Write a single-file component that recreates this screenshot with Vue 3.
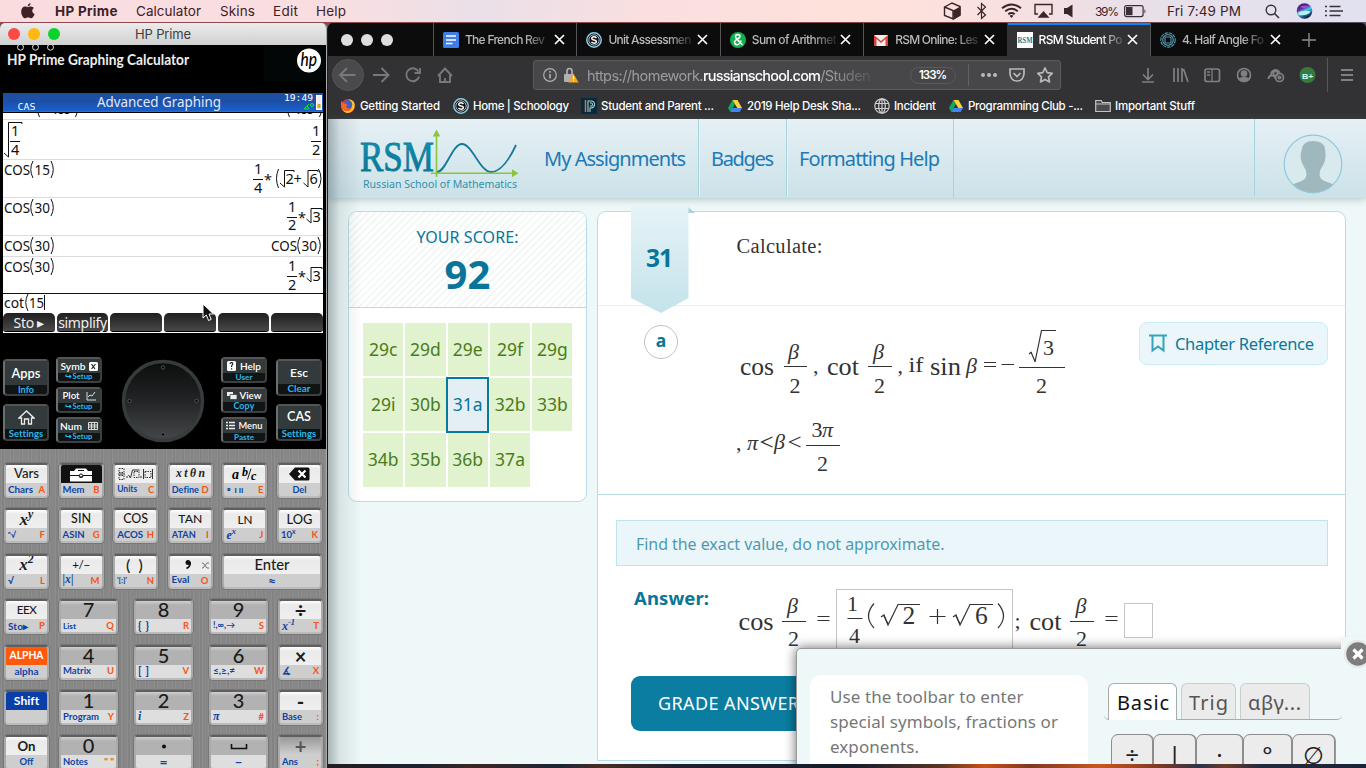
<script setup>
const widthOf = (el) => {
  const range = document.createRange()
  range.selectNodeContents(el)
  return range.getBoundingClientRect().width
}

// v-fit sets a label to a given width by tracking; v-fit.size scales the type first.
const vFit = {
  mounted(el, { value, modifiers }) {
    let natural = widthOf(el)
    if (!natural) return
    if (modifiers.size) {
      const ratio = Math.min(1.18, Math.max(0.86, value / natural))
      el.style.fontSize = (parseFloat(getComputedStyle(el).fontSize) * ratio).toFixed(2) + 'px'
      natural = widthOf(el)
    }
    const gaps = el.textContent.length - 1
    if (gaps > 0) el.style.letterSpacing = ((value - natural) / gaps).toFixed(3) + 'px'
  },
}

const menus = [
  { t: 'Calculator', w: 65, box: 84 },
  { t: 'Skins', w: 35, box: 53 },
  { t: 'Edit', w: 25, box: 43 },
  { t: 'Help', w: 30, box: 40 },
]

const tabs = [
  { t: 'The French Rev', w: 80, icon: 'doc' },
  { t: 'Unit Assessmen', w: 83, icon: 'schoology' },
  { t: 'Sum of Arithmet', w: 85, icon: 'amp' },
  { t: 'RSM Online: Les', w: 83, icon: 'gmail' },
  { t: 'RSM Student Po', w: 84, icon: 'rsm', active: true },
  { t: '4. Half Angle Fo', w: 82, icon: 'ring' },
]

const bookmarks = [
  { t: 'Getting Started', w: 80, box: 113, icon: 'fox' },
  { t: 'Home | Schoology', w: 96, box: 128, icon: 'schoology' },
  { t: 'Student and Parent ...', w: 113, box: 146, icon: 'power' },
  { t: '2019 Help Desk Sha...', w: 114, box: 147, icon: 'drive' },
  { t: 'Incident', w: 42, box: 74, icon: 'globe' },
  { t: 'Programming Club -...', w: 115, box: 147, icon: 'drive' },
  { t: 'Important Stuff', w: 80, box: 110, icon: 'folder' },
]

const scores = ['29c', '29d', '29e', '29f', '29g', '29i', '30b', '31a', '32b', '33b', '34b', '35b', '36b', '37a']

const darkKeys = [
  { cls: 'side', keys: [{ t: 'Apps', w: 29, s: 'Info', sw: 16 }, { icon: 'home', s: 'Settings', sw: 34 }] },
  { cls: 'mid', keys: [{ t: 'Symb', w: 25, s: '↪Setup', sw: 27, after: 'x' }, { t: 'Plot', w: 17, s: '↪Setup', sw: 27, after: 'plot' }, { t: 'Num', w: 22, s: '↪Setup', sw: 27, after: 'num' }] },
  { cls: 'wheelbox', keys: [] },
  { cls: 'mid', keys: [{ t: 'Help', w: 21, s: 'User', sw: 17, before: 'help' }, { t: 'View', w: 22, s: 'Copy', sw: 21, before: 'view' }, { t: 'Menu', w: 24, s: 'Paste', sw: 20, before: 'menu' }] },
  { cls: 'side', keys: [{ t: 'Esc', w: 18, s: 'Clear', sw: 23 }, { t: 'CAS', w: 24, s: 'Settings', sw: 34 }] },
]

const rows = [
  { cls: 'six', keys: [
    { t: 'Vars', w: 25, b: 'Chars', bw: 25, o: 'A' },
    { icon: 'mem', b: 'Mem', bw: 22, o: 'B' },
    { icon: 'units', b: 'Units', bw: 20, o: 'C' },
    { t: 'x t θ n', w: 29, k: 'kmath', b: 'Define', bw: 27, o: 'D' },
    { icon: 'abc', b: '∘ ı ıı', bw: 17, o: 'E' },
    { icon: 'del', b: 'Del', bw: 14, k: 'solo' },
  ] },
  { cls: 'six', keys: [
    { t: 'x', sup: 'y', k: 'kmathbig', b: 'ⁿ√', bw: 8, o: 'F' },
    { t: 'SIN', w: 20, b: 'ASIN', bw: 22, o: 'G' },
    { t: 'COS', w: 25, b: 'ACOS', bw: 26, o: 'H' },
    { t: 'TAN', w: 24, b: 'ATAN', bw: 24, o: 'I' },
    { t: 'LN', w: 15, b: 'e', bsup: 'x', o: 'J', bk: 'ital' },
    { t: 'LOG', w: 26, b: '10', bsup: 'x', o: 'K' },
  ] },
  { cls: 'six', keys: [
    { t: 'x', sup: '2', k: 'kmathbig', b: '√', o: 'L' },
    { t: '+/−', w: 18, b: '|x|', bw: 11, o: 'M', bk: 'ital' },
    { t: '( )', w: 17, b: "'[:]'", bw: 10, o: 'N' },
    { icon: 'comma', b: 'Eval', bw: 18, o: 'O' },
    { t: 'Enter', w: 35, b: '≈', k: 'enter solo' },
  ] },
  { cls: 'num', keys: [
    { t: 'EEX', w: 20, b: 'Sto▸', bw: 20, o: 'P' },
    { t: '7', k: 'digit', b: 'List', bw: 13, o: 'Q' },
    { t: '8', k: 'digit', b: '{ }', bw: 11, o: 'R' },
    { t: '9', k: 'digit', b: '!,∞,→', bw: 22, o: 'S' },
    { t: '÷', k: 'op', b: 'x', bsup: '-1', o: 'T', bk: 'ital' },
  ] },
  { cls: 'num', keys: [
    { t: 'ALPHA', w: 34, k: 'alpha solo', b: 'alpha', bw: 24 },
    { t: '4', k: 'digit', b: 'Matrix', bw: 28, o: 'U' },
    { t: '5', k: 'digit', b: '[ ]', bw: 11, o: 'V' },
    { t: '6', k: 'digit', b: '≤,≥,≠', bw: 22, o: 'W' },
    { t: '×', k: 'op', b: '∡', o: 'X' },
  ] },
  { cls: 'num', keys: [
    { t: 'Shift', w: 25, k: 'shift', b: '' },
    { t: '1', k: 'digit', b: 'Program', bw: 36, o: 'Y' },
    { t: '2', k: 'digit', b: 'i', o: 'Z', bk: 'ital' },
    { t: '3', k: 'digit', b: 'π', o: '#', bk: 'ital' },
    { t: '-', k: 'op', b: 'Base', bw: 20, o: ':' },
  ] },
  { cls: 'num', keys: [
    { t: 'On', w: 18, b: 'Off', bw: 14, k: 'solo onkey' },
    { t: '0', k: 'digit', b: 'Notes', bw: 25, o: '" "' },
    { icon: 'period', k: 'digit solo sign', b: '=' },
    { icon: 'space', k: 'digit solo sign', b: '–' },
    { t: '+', k: 'op pressed', b: 'Ans', bw: 16, o: ';' },
  ] },
]

const history = [
  { x: 4, y: 175, n: '15' },
  { x: 4, y: 213, n: '30' },
  { x: 4, y: 251, n: '30' },
  { x: 271, y: 251, n: '30' },
  { x: 4, y: 272, n: '30' },
]
</script>

<template>
  <div class="desktop">
    <header class="menubar">
      <svg class="apple" width="14" height="16" viewBox="0 0 14 16"><path fill="#3c2227" d="M9.6 0c.2 1.600-1.200 3.400-2.900 3.400C6.500 1.800 8 .3 9.600 0zM7 4.200c.7 0 1.700-.8 3.100-.7 1.200.1 2.200.6 2.800 1.500-2.500 1.600-2 4.900.7 5.900-.6 1.700-2 4.400-3.600 4.400-1.100 0-1.500-.7-2.900-.7s-1.800.7-2.900.7C2 15.300 0 11.400.2 8.200.3 5.400 2.100 3.700 4 3.600c1.300 0 2.300.6 3 .6z"/></svg>
      <span class="appname"><b v-fit="62.5">HP Prime</b></span>
      <span v-for="m in menus" :key="m.t" :style="{ width: m.box + 'px' }"><span v-fit="m.w">{{ m.t }}</span></span>
      <svg class="status" width="140" height="22" viewBox="940 0 140 22" fill="none" stroke="#3a2529" stroke-width="1.4">
        <path d="M944.500 7l7.500-4 8 3.500v8.500l-6.500 4-9-3.500z"/><path fill="#3a2529" stroke="none" d="M953 10.500l7.500-4v9l-7 4z"/><path d="M944.500 7l8.500 3.500v9"/>
        <path stroke-width="1.200" d="M977.500 7l8 8-4 3.500V3.500l4 3.500-8 8"/>
        <path stroke-width="2" d="M1002 8.200q9.500-7.500 19 0M1005.200 11.300q6.300-5 12.600 0M1008.300 14.300q3.200-2.500 6.400 0"/><path fill="#3a2529" stroke="none" d="M1009.500 15.800l2 2.200 2-2.200q-2-1.500-4 0z"/>
        <path d="M1038 14h-3V4.500h17V14h-3"/><path fill="#3a2529" stroke="none" d="M1043.500 11l6 6.800h-12z"/>
        <path fill="#3a2529" stroke="none" d="M1064 8h3l5.500-3.500v13L1067 14h-3z"/>
      </svg>
      <span class="pct"><span v-fit="24">39%</span></span>
      <svg class="batt" width="24" height="22" viewBox="0 0 24 22"><rect x=".6" y="5.600" width="18.500" height="11" rx="2" fill="none" stroke="#3a2f38" stroke-width="1.200"/><rect x="2" y="7" width="6.500" height="8.200" fill="#3a2f38"/><path fill="#3a2f38" d="M20.500 9v4.500q2-2.200 0-4.500z"/></svg>
      <span class="clock"><span v-fit="74">Fri 7:49 PM</span></span>
      <svg width="86" height="22" viewBox="1260 0 86 22">
        <circle cx="1271" cy="10" r="4.800" fill="none" stroke="#3a3038" stroke-width="1.400"/><path d="M1274.500 13.500l4.500 4.500" stroke="#3a3038" stroke-width="1.600"/>
        <defs><linearGradient id="siri" x1="0" y1="0" x2=".5" y2="1"><stop offset="0" stop-color="#1b1648"/><stop offset=".4" stop-color="#6a2aa8"/><stop offset=".6" stop-color="#46c8e8"/><stop offset="1" stop-color="#0c1d4a"/></linearGradient></defs>
        <circle cx="1304.500" cy="11" r="7.800" fill="url(#siri)"/><path d="M1298 12.500q5-3 13-1-5 5-12 3.500z" fill="#b8f0fa"/><path d="M1300 7q4-2.500 8 0-3 2-8 0z" fill="#b04cd0"/>
        <path d="M1325 6.500h2M1325 11h2M1325 15.500h2M1329.500 6.500h11M1329.500 11h13.500M1329.500 15.500h11" stroke="#3a3038" stroke-width="1.700"/>
      </svg>
    </header>

    <section class="calc">
      <div class="calc-title">
        <i class="bead red"></i><i class="bead amber"></i><i class="bead green"></i>
        <span class="calc-name"><span v-fit="56">HP Prime</span></span>
      </div>
      <div class="calc-top">
        <svg class="brand-row" width="327" height="48" viewBox="0 45 327 48">
          <rect x="264" y="46" width="63" height="36" fill="#030606"/>
          <g fill="none" stroke="#ddd"><circle cx="20.500" cy="47.200" r="3"/><circle cx="35.500" cy="47.200" r="3"/><circle cx="50.500" cy="47.200" r="3"/></g>
          <text x="7" y="65" class="brand" textLength="182" lengthAdjust="spacingAndGlyphs">HP Prime Graphing Calculator</text>
          <circle cx="309" cy="60.500" r="12" fill="#fff"/>
          <text x="300.500" y="66" class="hp" textLength="16.500" lengthAdjust="spacingAndGlyphs">hp</text>
        </svg>
        <div class="screen">
          <svg width="320" height="20" viewBox="3 93 320 20">
            <defs><linearGradient id="bar" x1="0" y1="0" x2="0" y2="1"><stop offset="0" stop-color="#1d4f9e"/><stop offset=".5" stop-color="#1e4fa8"/><stop offset="1" stop-color="#1761cf"/></linearGradient></defs>
            <rect x="3" y="93" width="320" height="18" fill="url(#bar)"/><path d="M3 111.500h320" stroke="#666"/>
            <text x="17.500" y="109.500" class="lcd" font-size="9.500" textLength="18" lengthAdjust="spacingAndGlyphs">CAS</text>
            <text x="97" y="107" class="lcd-title" textLength="124" lengthAdjust="spacingAndGlyphs">Advanced Graphing</text>
            <text x="284" y="101" class="lcd" font-size="9" textLength="29" lengthAdjust="spacingAndGlyphs">19:49</text>
            <path d="M309 104l-5 5h5M307 106l2 3" stroke="#18e04a" fill="none"/><circle cx="312" cy="105" r="1.500" stroke="#18e04a" fill="none"/>
            <rect x="316.500" y="95.500" width="5" height="14" fill="#eee" stroke="#fff"/><rect x="317.500" y="104" width="3" height="4" fill="#d9a514"/>
          </svg>
          <svg class="history" width="320" height="180" viewBox="3 113 320 180">
            <rect x="3" y="113" width="320" height="180" fill="#fff"/>
            <path d="M3 119.500h320M3 159.500h320M3 197.500h320M3 235.500h320M3 256.500h320" stroke="#dcdcdc"/>
            <text x="51" y="114" textLength="20">100</text><text x="294" y="114" textLength="20">100</text>
            <path class="ln" d="M38 113l1.500 4M77 113l-1.500 4M288 113l1.500 4M321 113l-1.500 4"/>
            <path class="ln" d="M4 153l4.500 4V122.500H22v1.500M10 141.500h10M311 141.500h10M253 179.500h10M287 217.500h10M287 276.500h10"/>
            <path class="ln" d="M280 183l4.500 4V170.500H294v1.500M303.500 183l4.500 4V170.500H318v1.500M306.500 219l4.500 4V208.500H322v1.500M306.500 278l4.500 4V267.500H322v1.500"/>
            <text x="11" y="135.500">1</text><text x="11" y="154.500">4</text><text x="312" y="135.500">1</text><text x="312" y="155">2</text>
            <text x="254" y="174">1</text><text x="254" y="192.500">4</text><text x="264" y="185">*</text><text x="285.500" y="184">2</text><text x="293.500" y="184">+</text><text x="309.500" y="184">6</text>
            <path class="ln" d="M278.500 169q-4 9.500 0 19M318.500 169q5 9.500 0 19"/>
            <text x="288" y="211.500">1</text><text x="288" y="230">2</text><text x="298" y="223">*</text><text x="312.500" y="222">3</text>
            <text x="288" y="271">1</text><text x="288" y="289.500">2</text><text x="298" y="282">*</text><text x="312.500" y="281">3</text>
            <g v-for="(h, i) in history" :key="i">
              <text :x="h.x" :y="h.y" textLength="26" lengthAdjust="spacingAndGlyphs">COS</text>
              <text :x="h.x + 30.500" :y="h.y" textLength="15.500" lengthAdjust="spacingAndGlyphs">{{ h.n }}</text>
              <path class="ln" :d="`M${h.x + 29} ${h.y - 14}q-4.500 8.500 0 17M${h.x + 47} ${h.y - 14}q4.500 8.500 0 17`"/>
            </g>
          </svg>
          <svg class="entry" width="320" height="20" viewBox="3 293 320 20">
            <rect x="3" y="293" width="320" height="20" fill="#fff"/><path class="ln" d="M3 293.500h320M44.500 295v15"/>
            <text x="4" y="308" textLength="20" lengthAdjust="spacingAndGlyphs">cot</text><text x="29" y="308" textLength="15" lengthAdjust="spacingAndGlyphs">15</text>
            <path class="ln" d="M28 294q-4.500 8.500 0 17"/>
          </svg>
          <div class="softkeys">
            <span><em v-fit="31">Sto ▸</em></span><span><em v-fit="49">simplify</em></span><span></span><span></span><span></span><span></span>
          </div>
        </div>
        <div class="dark-keys">
          <div v-for="(c, ci) in darkKeys" :key="ci" :class="['dcol', c.cls]">
            <svg v-if="c.cls === 'wheelbox'" width="84" height="84" viewBox="-42 -42 84 84">
              <defs><linearGradient id="wheel" x1="0" y1="0" x2="0" y2="1"><stop offset="0" stop-color="#0c0d0d"/><stop offset=".5" stop-color="#222425"/><stop offset="1" stop-color="#45484a"/></linearGradient></defs>
              <circle r="39.500" fill="url(#wheel)" stroke="#363b3c" stroke-width="3.500"/>
              <g fill="#000" stroke="#555"><circle cy="-33.500" r="1.700"/><circle cy="33.500" r="1.700"/><circle cx="-33.500" r="1.700"/><circle cx="33.500" r="1.700"/></g>
            </svg>
            <div v-for="(k, i) in c.keys" :key="i" class="dkey">
              <div class="dmain">
                <svg v-if="k.icon" width="17" height="15" viewBox="0 0 17 15" fill="none" stroke="#eee" stroke-width="1.300"><path d="M1 8L8.500 1 16 8h-2.500v6h-3V9h-4v5h-3V8z"/></svg>
                <svg v-if="k.before === 'help'" width="10" height="11" viewBox="0 0 10 11"><rect width="9" height="10" y="1" rx="1.500" fill="#fff"/><path d="M3 4q.2-1.400 1.700-1.300Q6.300 3 5.500 4.500L4.600 6v1M4.600 8.200v1.300" stroke="#222" fill="none" stroke-width="1.200"/></svg>
                <svg v-if="k.before === 'view'" width="10" height="9" viewBox="0 0 10 9"><path fill="#eee" d="M0 1h6v4H0z"/><path fill="#eee" stroke="#333" stroke-width=".7" d="M3 3.500h7v5H3z"/></svg>
                <svg v-if="k.before === 'menu'" width="10" height="9" viewBox="0 0 10 9" stroke="#eee" stroke-width="1.400"><path d="M0 1.500h2M0 4.500h2M0 7.500h2M3 1.500h6M3 4.500h6M3 7.500h6"/></svg>
                <span v-if="k.t" v-fit.size="k.w">{{ k.t }}</span>
                <svg v-if="k.after === 'x'" width="9" height="10" viewBox="0 0 9 10"><rect width="9" height="9" y="1" rx="1.500" fill="#fff"/><path d="M2.500 3l3.500 5M6.500 3l-4 5" stroke="#222" stroke-width="1.200"/></svg>
                <svg v-if="k.after === 'plot'" class="gapped" width="10" height="10" viewBox="0 0 10 10" fill="none" stroke="#ddd"><path d="M1 1v8h9M2 6l2-2 2 1 3-4"/></svg>
                <svg v-if="k.after === 'num'" class="gapped" width="10" height="10" viewBox="0 0 10 10" fill="none" stroke="#ddd"><path d="M.5 1.500h9v7h-9zM.5 4h9M.5 6h9M3.500 1.500v7M6.500 1.500v7"/></svg>
              </div>
              <div class="dsub"><span v-fit.size="k.sw">{{ k.s }}</span></div>
            </div>
          </div>
        </div>
      </div>
      <div class="calc-bottom">
        <div v-for="(r, ri) in rows" :key="ri" :class="['krow', r.cls]">
          <div v-for="(k, i) in r.keys" :key="i" :class="['key', k.k]">
            <div class="face" :class="{ memface: k.icon === 'mem' }">
              <svg v-if="k.icon === 'mem'" width="24" height="15" viewBox="0 0 24 15"><path fill="#fff" d="M1 4h4l2-2.500h10L19 4h4v4H1zM1 9h8.500q.5 2 2.500 2t2.500-2H23v5.500H1z"/><path d="M9 3.500h6" stroke="#111"/><circle cx="12" cy="8.500" r="1.600" fill="#fff" stroke="#111"/></svg>
              <svg v-else-if="k.icon === 'units'" width="36" height="14" viewBox="0 0 36 14" fill="none" stroke="#333"><path stroke-dasharray="1.500 1" d="M1 1.500h5v4H1zM1 8.500h5v4H1zM16 4.500h5v6h-5zM27 4.500h6v6h-6z"/><path d="M0 7h7M9 9v2M10.500 8l2 3 2-8h7M23 9v2M25.500 2v10M34.500 2v10"/></svg>
              <svg v-else-if="k.icon === 'abc'" class="abc" width="28" height="16" viewBox="0 0 28 16"><text x="1" y="12.500" font-size="14">a</text><text x="11" y="9.500" font-size="12">b</text><text x="20" y="14" font-size="12">c</text><path d="M20 2.500l-3.500 11" stroke="#222"/></svg>
              <svg v-else-if="k.icon === 'del'" width="21" height="14" viewBox="0 0 21 14"><path fill="#111" d="M0 7L6 .5h13q1.500 0 1.500 1.500v10q0 1.500-1.500 1.500H6z"/><path d="M9.500 3.500l7 7M16.500 3.500l-7 7" stroke="#fff" stroke-width="2.200"/></svg>
              <svg v-else-if="k.icon === 'comma'" class="comma" width="26" height="14" viewBox="0 0 26 14"><circle cx="5" cy="4.500" r="2.500" fill="#111"/><path d="M7 4q1 4-3.500 6.500" stroke="#111" stroke-width="1.700" fill="none"/><path d="M19 5h1l4 5h2M19 10h1l4-5h2" stroke="#555" fill="none" stroke-width=".8"/></svg>
              <svg v-else-if="k.icon === 'space'" width="18" height="10" viewBox="0 0 18 10"><path d="M1.500 4v4.500h15V4" fill="none" stroke="#111" stroke-width="1.600"/></svg>
              <svg v-else-if="k.icon === 'period'" width="6" height="10" viewBox="0 0 6 10"><circle cx="3" cy="6.500" r="2" fill="#111"/></svg>
              <span v-else-if="k.w" v-fit.size="k.w">{{ k.t }}</span>
              <span v-else>{{ k.t }}<sup v-if="k.sup">{{ k.sup }}</sup></span>
            </div>
            <div class="legend" :class="k.bk">
              <span v-if="k.bw" v-fit.size="k.bw" class="blue">{{ k.b }}</span>
              <span v-else class="blue">{{ k.b }}<sup v-if="k.bsup">{{ k.bsup }}</sup></span>
              <span v-if="k.o" class="orange">{{ k.o }}</span>
            </div>
          </div>
        </div>
      </div>
      <svg class="pointer" width="14" height="20" viewBox="0 0 14 20"><path d="M1 1v14l3.300-3 2.300 5.500 2.600-1.100L7 11h4.500z" fill="#111" stroke="#fff" stroke-width="1"/></svg>
    </section>

    <section class="browser">
      <div class="tabbar">
        <div class="lights"><i></i><i></i><i></i></div>
        <div v-for="t in tabs" :key="t.t" class="tab" :class="{ active: t.active }">
          <svg width="16" height="16" viewBox="0 0 16 16">
            <g v-if="t.icon === 'doc'"><rect width="16" height="16" rx="1.500" fill="#3f7de8"/><path d="M3 4h10M3 8h10M3 11.500h6.500" stroke="#fff" stroke-width="1.500"/></g>
            <g v-if="t.icon === 'schoology'"><circle cx="8" cy="8" r="7.200" fill="#111" stroke="#86cdee" stroke-width="1.500"/><circle cx="8" cy="8" r="5.200" fill="none" stroke="#ddd" stroke-width=".8"/><path d="M10.500 5.800Q8 3.800 6 5.500q-1 1.800 2 2.500 3.300.8 2 2.600Q8 12 5.400 10.200" fill="none" stroke="#fff" stroke-width="1.500"/></g>
            <g v-if="t.icon === 'amp'"><circle cx="8" cy="8" r="8" fill="#12b04f"/><path d="M12.500 13L6 6q-1.500-3 1.500-3.500 3 0 2.300 2.500Q9 6.500 6 8q-2.500 2-.8 4 3.300 2.500 6-3.500" fill="none" stroke="#fff" stroke-width="1.600"/></g>
            <g v-if="t.icon === 'gmail'"><path d="M1 3h14v11H1z" fill="#eee"/><path d="M1 14V3l7 6 7-6v11h-2.500V7L8 11 3.500 7v7z" fill="#d9453a"/></g>
            <g v-if="t.icon === 'rsm'"><rect width="16" height="16" fill="#fff"/><text x=".5" y="11" textLength="15" lengthAdjust="spacingAndGlyphs" class="rsmfav">RSM</text></g>
            <g v-if="t.icon === 'ring'" fill="none" stroke="#4e93a6" stroke-width="1.200"><circle cx="8" cy="8" r="7.200" stroke-dasharray="3.500 .8"/><circle cx="8" cy="8" r="5.300"/><rect x="5" y="5" width="6" height="6" rx="1"/></g>
          </svg>
          <span class="tabtext"><span v-fit="t.w">{{ t.t }}</span></span>
          <svg width="11" height="11" viewBox="0 0 11 11"><path d="M1 1l9 9M10 1l-9 9" stroke="#fff" stroke-width="1.700"/></svg>
        </div>
        <svg class="newtab" width="14" height="14" viewBox="0 0 14 14"><path d="M7 0v14M0 7h14" stroke="#8d8d8f" stroke-width="1.400"/></svg>
      </div>
      <div class="toolbar">
        <svg width="200" height="36" viewBox="328 58 200 36" fill="none" stroke="#78787a" stroke-width="1.900">
          <circle cx="348" cy="76" r="15.500" fill="#4a4a4c" stroke="#565658" stroke-width="1"/>
          <path d="M355.500 76h-15M347 69l-7 7 7 7M373 76h15M381.500 69l7 7-7 7"/>
          <path d="M418.500 72.500a6.500 6.500 0 1 0 .6 5M420 69v5h-5.500"/>
          <path d="M438 77l7-7.500 7 7.500M440 76v7h10v-7M445 79v4"/>
        </svg>
        <div class="urlbar">
          <svg width="53" height="28" viewBox="534 62 53 28">
            <circle cx="550" cy="76" r="6.300" fill="none" stroke="#b0b0b3" stroke-width="1.200"/><path d="M550 75v4.500M550 72v1.700" stroke="#b0b0b3" stroke-width="1.600"/>
            <path d="M567 75v-3q0-2.500 2.500-2.500T572 72v3" fill="none" stroke="#b0b0b3" stroke-width="1.700"/><rect x="564" y="75" width="10" height="8" rx="1" fill="#b0b0b3"/><path d="M573.500 74.500l5 9h-10z" fill="#f7a91c"/><path d="M573.500 77v3.500M573.500 81.500v1" stroke="#fff"/>
          </svg>
          <span class="url"><span v-fit="116.5">https://homework.</span><b v-fit="118">russianschool.com</b><span v-fit="50.5">/Studen</span></span>
          <span class="pill"><span v-fit="28">133%</span></span>
          <svg width="90" height="28" viewBox="968 62 90 28" fill="none" stroke="#b9b9bb" stroke-width="1.700">
            <path d="M968.500 65v22" stroke="#606468" stroke-width="1"/><g fill="#b9b9bb" stroke="none"><circle cx="983" cy="76" r="2"/><circle cx="989" cy="76" r="2"/><circle cx="995" cy="76" r="2"/></g>
            <path d="M1010 70h14v5q-1 7-7 7t-7-7zM1013.500 74l3.500 3.500 3.500-3.500"/>
            <path stroke-linejoin="round" d="M1045 69l2.200 4.700 5 .7-3.700 3.500 1 5-4.500-2.500-4.500 2.500 1-5-3.700-3.500 5-.7z"/>
          </svg>
        </div>
        <svg class="tools" width="226" height="36" viewBox="1140 58 226 36" fill="none" stroke="#808082" stroke-width="1.700">
          <path d="M1148 69v11M1143 75.500l5 5 5-5M1142 83h12M1174 69v14M1178 69v14M1182 69v14M1183.500 70l4.500 13"/>
          <rect x="1205" y="70" width="14.500" height="12.500" rx="2"/><path d="M1212 70v12.500M1207 73h3M1207 76h3" stroke-width="1.300"/>
          <circle cx="1244" cy="76" r="6.500"/><circle cx="1244" cy="74.500" r="2.500" fill="#808082"/><path d="M1239 80q5-2.500 10 0-5 4.500-10 0z" fill="#808082"/>
          <path d="M1268.500 80q0-3.500 3.500-3.500t3.500 3.500M1271 76q0-3.500 4-5 4 0 5 4" stroke-width="2"/><circle cx="1279.500" cy="78.500" r="4"/><circle cx="1279.500" cy="78.500" r="1.200"/><circle cx="1275.500" cy="74.500" r="2.200"/>
          <circle cx="1307.500" cy="76" r="8" fill="#367a3e" stroke="none"/><text x="1302" y="79.500" class="bplus" textLength="11.500" lengthAdjust="spacingAndGlyphs">B+</text>
          <path d="M1327.500 59v34" stroke="#58585a" stroke-width="1"/><path d="M1341 71h12M1341 76h12M1341 81h12" stroke-width="1.800"/>
        </svg>
      </div>
      <div class="bookmarks">
        <span v-for="b in bookmarks" :key="b.t" class="bm" :style="{ width: b.box + 'px' }">
          <svg width="16" height="16" viewBox="0 0 16 16">
            <g v-if="b.icon === 'fox'"><circle cx="8" cy="8" r="7" fill="#e8332a"/><path d="M9 1q7 2 5.500 8-1 5-6.500 6-4 0-6-4 5 4 9 0 2-4-2-10z" fill="#ffc928"/><circle cx="8" cy="6.500" r="4.300" fill="#3b62c9"/><path d="M1 7V3l2 2q3 .5 4.500 2L6 9q2.500 3 6 .5-3 5-7.500 3.500Q1 11.500 1 7z" fill="#f8661d"/></g>
            <g v-if="b.icon === 'schoology'"><circle cx="8" cy="8" r="7.200" fill="#111" stroke="#86cdee" stroke-width="1.500"/><circle cx="8" cy="8" r="5.200" fill="none" stroke="#ddd" stroke-width=".8"/><path d="M10.500 5.800Q8 3.800 6 5.500q-1 1.800 2 2.500 3.300.8 2 2.600Q8 12 5.400 10.200" fill="none" stroke="#fff" stroke-width="1.500"/></g>
            <g v-if="b.icon === 'power'"><rect width="16" height="16" fill="#052b42"/><path d="M4.500 2v12" stroke="#e8703c" stroke-width="1.400"/><path d="M7 14V3h4q3 1 2.500 4-1 3.500-4.500 3v4M9 8q2.500.5 2.500-1.500T9 5" fill="none" stroke="#a9c9bd" stroke-width="1.100"/></g>
            <g v-if="b.icon === 'drive'"><path d="M5.500 2L1 10l2.300 4L8 6z" fill="#11a861"/><path d="M5.500 2h5L15 10h-4.700z" fill="#fdd13a"/><path d="M5.600 10H15l-2.300 4H3.300z" fill="#4285f4"/></g>
            <g v-if="b.icon === 'globe'" fill="none" stroke="#d0d0d2" stroke-width="1.200"><circle cx="8" cy="8" r="7.200"/><ellipse cx="8" cy="8" rx="3.300" ry="7.200"/><path d="M1.500 5.500h13M1.500 10.500h13M8 1v14"/></g>
            <path v-if="b.icon === 'folder'" d="M.7 13.500V2.500h5.600l1 2h8v9zM.7 6h14.500" fill="#4b4b4d" stroke="#c4c4c6" stroke-width="1.200"/>
          </svg>
          <span v-fit="b.w">{{ b.t }}</span>
        </span>
      </div>

      <main class="page">
        <nav class="sitenav">
          <svg class="logo" width="370" height="78" viewBox="328 119 370 78" fill="none">
            <defs><linearGradient id="rsm" x1="0" y1="0" x2="0" y2="1"><stop offset="0" stop-color="#129ab8"/><stop offset="1" stop-color="#0a6c8e"/></linearGradient></defs>
            <text x="360" y="170.500" class="rsm" fill="url(#rsm)" stroke="#0a7f9f" textLength="74" lengthAdjust="spacingAndGlyphs">RSM</text>
            <path d="M437 172c9 0 15-28 25-28s18 28 29 28 19-14 25-27" stroke="#16799c" stroke-width="1.800"/>
            <path d="M436.500 177v-42M431 173.300h82" stroke="#8bc53f" stroke-width="1.600"/><path d="M436.500 129.500l3.800 7h-7.600zM518.500 173.300l-6.500-4v8z" fill="#8bc53f"/>
            <text x="363" y="188" class="tagline" textLength="154" lengthAdjust="spacingAndGlyphs">Russian School of Mathematics</text>
          </svg>
          <a class="n1"><span v-fit="142">My Assignments</span></a><a class="n2"><span v-fit="63">Badges</span></a><a class="n3"><span v-fit="141">Formatting Help</span></a>
          <span class="avatar"><svg width="60" height="60" viewBox="-30 -30 60 60"><defs><clipPath id="face"><circle r="28.500"/></clipPath></defs><circle r="28.800" fill="#d9eaef" stroke="#8acadd" stroke-width="1.200"/><path clip-path="url(#face)" fill="#9fb8be" d="M-11-15Q-10-23 0-23q11 0 12 8l.5 4q.5 8-3 13-3 4-3 8 0 5 5 7l8 3v10h-39v-10l8-3q5-2 5-7 0-4-3-8-4-6-2.500-14z"/></svg></span>
        </nav>
        <div class="cols">
          <aside class="scorecard">
            <div class="scorehead"><span class="lbl"><span v-fit="102">YOUR SCORE:</span></span><strong>92</strong></div>
            <div class="cells"><span v-for="s in scores" :key="s" :class="{ on: s === '31a' }">{{ s }}</span></div>
          </aside>
          <article class="problem">
            <div class="ribbon"><svg width="66" height="108" viewBox="631 205 66 108"><defs><linearGradient id="rib" x1="0" y1="0" x2="0" y2="1"><stop offset="0" stop-color="#e6f3f7"/><stop offset="1" stop-color="#c3e3ea"/></linearGradient></defs><path d="M688 206l7 6h-7z" fill="#a0d5df"/><path d="M631 205h57.500v92L661 312l-30-15z" fill="url(#rib)"/></svg><b v-fit="27">31</b></div>
            <div class="prompt"><span v-fit="86">Calculate:</span></div>
            <div class="task">
              <span class="part">a</span>
              <svg class="formula" width="350" height="160" viewBox="730 322 350 160">
                <text x="740" y="375" class="fn" textLength="34" lengthAdjust="spacingAndGlyphs">cos</text><text x="788" y="359" class="it">β</text><text x="789.500" y="392.500">2</text><text x="813" y="373">,</text>
                <text x="827" y="375" class="fn" textLength="32" lengthAdjust="spacingAndGlyphs">cot</text><text x="873" y="359" class="it">β</text><text x="874" y="392.500">2</text><text x="897.500" y="373">,</text>
                <text x="908.500" y="372" textLength="15" lengthAdjust="spacingAndGlyphs">if</text><text x="930" y="375" class="fn" textLength="31" lengthAdjust="spacingAndGlyphs">sin</text><text x="966" y="373" class="it">β</text>
                <path d="M784 366.500h23M868 366.500h24M984 362.500h12M984 366.500h12M1001.500 364.500h12.500M1019 367.500h46M806 445.500h34"/>
                <path d="M1029 354l2.500-2" /><path d="M1031 352l4 9.500" stroke-width="2"/><path d="M1035 362l6.500-31.500h14.500"/>
                <text x="1043" y="355">3</text><text x="1036" y="392.500">2</text>
                <text x="736" y="450">,</text><text x="747" y="450" class="it">π</text><text x="774" y="449" class="it">β</text>
                <path d="M772.500 437l-11 5 11 5M800.500 437l-11 5 11 5"/>
                <text x="811.500" y="437">3</text><text x="822" y="437" class="it">π</text><text x="817" y="471">2</text>
              </svg>
              <a class="chapter"><svg width="18" height="19" viewBox="0 0 18 19"><path d="M0 1.500h18M3.500 2v14.500l5.500-4 5.500 4V2" fill="none" stroke="#35a3bb" stroke-width="2"/></svg><span v-fit="139">Chapter Reference</span></a>
            </div>
            <div class="note"><span v-fit="308.500">Find the exact value, do not approximate.</span></div>
            <div class="answer">
              <b v-fit="75">Answer:</b>
              <svg class="formula" width="440" height="90" viewBox="730 580 440 90">
                <rect x="836.500" y="589.500" width="176" height="78" fill="#fff" stroke="#c5c5c5"/><rect x="1124.500" y="603.500" width="28" height="34" fill="#fff" stroke="#c5c5c5"/>
                <text x="738.500" y="629.500" class="fn" textLength="35" lengthAdjust="spacingAndGlyphs">cos</text><text x="787" y="613" class="it">β</text><text x="788" y="646">2</text>
                <text x="847" y="610.500">1</text><text x="849" y="643">4</text><text x="902.500" y="624" class="big">2</text><text x="975" y="624" class="big">6</text>
                <text x="1014.500" y="628">;</text><text x="1029.500" y="629.500" class="fn" textLength="32" lengthAdjust="spacingAndGlyphs">cot</text><text x="1075.500" y="613" class="it">β</text><text x="1076" y="646">2</text>
                <path d="M782 621.500h24M817.500 616.500h12M817.500 620.500h12M847.500 618.500h15M1070 621.500h24M1105.500 616.500h12M1105.500 620.500h12M929.500 616.500h16M937.500 609v15"/>
                <path stroke-width="1.500" d="M874 603.500q-11 12.500 0 24.500M998 603.500q11 12.500 0 24.500"/>
                <path d="M881 617l3-2 4 10 10-20.500h22M953 617l3-2 4 10 10-20.500h23"/><path stroke-width="2.200" d="M884 616l4 8M956 616l4 8"/>
              </svg>
            </div>
            <button class="grade"><span v-fit="141">GRADE ANSWER</span></button>
          </article>
        </div>
        <div class="leftshade"></div>
        <div class="palette">
          <div class="hint"><span v-fit="193.5">Use the toolbar to enter</span><span v-fit="228">special symbols, fractions or</span><span v-fit="89">exponents.</span></div>
          <div class="symbols">
            <div class="ptabs"><span class="cur"><i v-fit="52">Basic</i></span><span class="trig"><i v-fit="39">Trig</i></span><span class="greek"><i v-fit="53">αβγ...</i></span></div>
            <div class="pkeys"><span class="k1">÷</span><span class="k2">|</span><span class="k3">·</span><span class="k4">°</span><span class="k5">∅</span></div>
          </div>
          <div class="close"><svg width="34" height="34" viewBox="-17 -17 34 34"><circle r="13" fill="#7d7d7d" stroke="#e9e9e9" stroke-width="2.500"/><path d="M-4.500-4.500l9 9M4.500-4.500l-9 9" stroke="#fff" stroke-width="3.200"/></svg></div>
        </div>
      </main>
    </section>
  </div>
</template>

<style>
html, body { margin: 0; overflow: hidden; }
</style>

<style scoped>
.desktop { position: relative; width: 1366px; height: 768px; overflow: hidden; font-family: Inter, "Liberation Sans", sans-serif; background: linear-gradient(90deg, #241c20 0 328px, #1b2130 420px, #3d2624 470px, #1d2436 560px, #4a2c26 600px, #1d2030 680px, #161c2a 850px, #5a3423 940px, #c8501a 985px, #7d3823 1030px, #c8581f 1100px, #7d3823 1160px, #2b3348 1200px, #6b3a2a 1225px, #23293c 1260px, #1b2338); }
.desktop * { box-sizing: border-box; }
svg { display: block; flex: none; }
i, em { font-style: normal; }
span, b { white-space: nowrap; }
.menubar { height: 22px; display: flex; align-items: center; padding-left: 21px; font-size: 13.500px; color: #3c2227; background: linear-gradient(90deg, #fadcde 0, #f9dee1 330px, #eae0e8 480px, #f9dfe0 640px, #ffe1db 850px, #f9e0df 1000px, #e9dfe9 1130px, #e1e1ef); position: relative; }
.menubar > * { flex: none; }
.menubar::after { content: ""; position: absolute; left: 0; right: 0; top: 22px; height: 6px; background: linear-gradient(90deg, #8e4a50 0 700px, #7a4548 1000px, #5a5468); }
.appname { width: 101px; padding-left: 20px; }
.status { margin-left: 584px; }
.pct { width: 44px; padding-left: 15px; font-size: 12px; }
.batt { margin-right: 19px; }
.clock { width: 93px; }

.calc { position: absolute; left: 0; top: 23px; width: 327px; height: 750px; border-radius: 5px 5px 0 0; overflow: hidden; background: #000; border-right: 1px solid #aaa; }
.calc-title { height: 22px; display: flex; align-items: center; padding-left: 8px; background: linear-gradient(#ececec, #d0d0d0); }
.bead { width: 12px; height: 12px; border-radius: 50%; margin-right: 8px; flex: none; }
.red { background: #fc4948; } .amber { background: #fdb90e; } .green { background: #0bd32c; }
.calc-name { margin-left: 67px; font-size: 13px; color: #3d3d3d; }
.calc-top { height: 404px; background: #000; }
.brand { font: 700 15px Lato, sans-serif; fill: #eee; }
.hp { font: italic 500 20px Lato, sans-serif; fill: #000; }
.screen { width: 320px; margin-left: 3px; }
.lcd { font-family: "DejaVu Sans Mono", monospace; fill: #fff; }
.lcd-title { font: 15px "Noto Sans", sans-serif; fill: #e2eaf8; }
.history text, .entry text { font: 14.500px "Noto Sans", sans-serif; fill: #111; }
.ln { fill: none; stroke: #111; stroke-width: 1; }
.softkeys { display: flex; height: 20px; background: #fff; padding-bottom: 1px; gap: 2px; }
.softkeys span { flex: 1 1 0; min-width: 0; border-radius: 5px 5px 3px 3px; background: linear-gradient(#1f1f1f, #484848); color: #eee; font: 14px/19px "Noto Sans", sans-serif; display: flex; justify-content: center; border-bottom: 1px solid #000; }
.dark-keys { display: flex; padding: 24px 0 0 3px; }
.dcol { display: flex; flex-direction: column; width: 46px; }
.side { gap: 8px; padding-top: 2px; }
.mid { gap: 4px; margin-left: 7px; }
.wheelbox { width: 112px; padding: 2px 0 0 13px; margin-left: 6px; }
.wheelbox + .mid { margin-left: 1px; }
.mid + .side { margin-left: 9px; }
.dkey { border: 2px solid #3c4041; border-left-color: #6b6f70; border-top-color: #555; border-radius: 4px; overflow: hidden; display: flex; flex-direction: column; background: #101415; height: 26px; color: #fff; font-family: Lato, sans-serif; }
.side .dkey { height: 37px; }
.dmain { flex: 1 0 55%; display: flex; align-items: center; justify-content: center; gap: 3px; background: #333a3c; font-size: 10.500px; font-weight: 600; line-height: 1; }
.side .dmain { font-size: 13.500px; }
.gapped { margin-left: 3px; }
.dsub { flex: 1 1 0; display: flex; align-items: center; justify-content: center; color: #2ab8ec; font-size: 7.500px; font-weight: 700; line-height: 1; }
.side .dsub { font-size: 9.500px; }

.calc-bottom { height: 320px; padding: 14px 5px 0 4px; background: repeating-linear-gradient(90deg, #878787 0 1px, #8d8d8d 1px 2px, #838383 2px 4px, #8f8f8f 4px 5px, #878787 5px 9px); display: flex; flex-direction: column; gap: 10.400px; }
.krow { display: flex; height: 35px; flex: none; width: 318px; }
.six { justify-content: space-between; }
.key { width: 45px; flex: none; border: 2px solid #aaa; border-top-color: #5f5f5f; border-bottom-color: #bbb; border-radius: 4px; overflow: hidden; display: flex; flex-direction: column; box-shadow: 0 0 0 1px #777; background: #cecece; color: #1b1b1b; font-family: Lato, sans-serif; }
.enter { width: 100px; }
.num .key { margin-right: 10px; }
.num .digit { width: 59px; margin-right: 16px; }
.num .digit:nth-child(4) { margin-right: 10px; }
.num .key:last-child { margin-right: 0; }
.face { height: 18px; flex: none; display: flex; align-items: center; justify-content: center; background: linear-gradient(#fff, #eaeaea 4px, #efefef); font-size: 13.500px; font-weight: 500; line-height: 1; }
.face.memface { background: #111; }
.legend { flex: 1; display: flex; align-items: center; justify-content: space-between; padding: 0 2px; font-size: 9.500px; font-weight: 700; line-height: 1; }
.blue { color: #0d43a5; } .orange { color: #fb5310; }
.solo .legend { justify-content: center; }
.digit { background: #dedede; }
.digit .face { background: linear-gradient(#d0d0d0, #b2b2b2 4px, #b2b2b2); font-size: 20px; line-height: 16px; padding-bottom: 2px; }
.op .face { font: 700 20px Lato, sans-serif; line-height: 16px; }
.pressed .face { background: linear-gradient(#999, #d0d0d0); color: #555; }
.kmath .face, .kmathbig .face { font-family: "Liberation Serif", serif; font-style: italic; font-weight: 700; }
.kmathbig .face { font-size: 17px; }
.abc text { font-family: "Liberation Serif", serif; font-style: italic; font-weight: 700; }
sup { font-size: .7em; line-height: 0; }
.ital { font-family: "Liberation Serif", serif; font-style: italic; font-size: 12px; }
.ital .orange { font: 700 9.500px Lato, sans-serif; }
.alpha .face { background: #ff5a0c; color: #fff; font-size: 12px; font-weight: 700; }
.shift .face { background: #0b3fa8; color: #fff; font-weight: 700; }
.onkey .face { font-weight: 700; }
.enter .legend, .sign .legend { font-size: 14px; }
.comma { margin-left: 12px; }
.pointer { position: absolute; left: 202px; top: 280px; }

.browser { position: absolute; left: 328px; top: 23px; width: 1038px; height: 741px; background: #323234; overflow: hidden; border-radius: 5px 5px 0 0; }
.tabbar { height: 33px; display: flex; background: #0c0c0d; align-items: stretch; }
.lights { width: 105px; display: flex; align-items: center; gap: 8px; padding-left: 13px; }
.lights i { width: 12px; height: 12px; border-radius: 50%; background: #dedede; }
.tab { width: 143.400px; display: flex; align-items: center; padding-left: 9px; border-left: 1px solid #555558; color: #b9b9bb; font-size: 12px; font-weight: 500; }
.tabtext { width: 84px; margin: 0 4.500px 0 6px; overflow: hidden; mask-image: linear-gradient(90deg, #000 60px, rgba(0,0,0,.15)); }
.active { background: #323234; color: #fff; border-left-color: #323234; box-shadow: inset 0 2px #0a84ff; }
.rsmfav { font: 700 8px "Liberation Serif", serif; fill: #147d9c; }
.newtab { align-self: center; margin-left: 9px; }
.toolbar { height: 38px; display: flex; align-items: center; }
.urlbar { width: 528px; height: 30px; margin-left: 5px; border: 1px solid #5b5b5d; border-radius: 3px; background: #474749; display: flex; align-items: center; }
.url { width: 286px; font-size: 14.500px; color: #9c9ca0; display: flex; overflow: hidden; mask-image: linear-gradient(90deg, #000 245px, rgba(0,0,0,.1)); }
.url b { color: #fff; font-weight: 500; }
.pill { width: 46px; height: 17px; margin: 0 12px 0 37px; border-radius: 9px; border: 1px solid #5b5b5d; color: #fff; font-size: 11.500px; font-weight: 600; line-height: 15px; padding-left: 8px; }
.tools { margin-left: 79px; }
.bplus { font: 700 8px "Liberation Sans", sans-serif; fill: #cfe; stroke: none; }
.bookmarks { height: 24px; display: flex; align-items: center; padding-left: 12px; color: #fff; font-size: 11.500px; font-weight: 500; }
.bm { display: flex; align-items: center; gap: 4px; flex: none; }

.page { position: relative; height: 646px; margin-top: 1px; background: #eef8f8; font-family: "Noto Sans", "Open Sans", sans-serif; }
.sitenav { height: 79px; display: flex; background: linear-gradient(#e6f0f5, #cbe2e8); box-shadow: 0 1px 8px rgba(80,110,110,.4); position: relative; }
.sitenav a { border-left: 1px solid #a5d3de; box-shadow: inset 1px 0 #e2f5f8; height: 78px; line-height: 80px; font-size: 20px; color: #2079b6; padding-left: 12px; flex: none; }
.sitenav .n1 { width: 158px; margin-left: -158px; border: 0; box-shadow: none; padding-left: 4px; }
.n2 { width: 88px; } .n3 { width: 167px; }
.avatar { flex: 1; border-left: 1px solid #a5d3de; padding: 15px 0 0 329px; background: linear-gradient(#a5d3de, #a5d3de) 300px 0 / 1px 77px no-repeat; }
.rsm { font: 43px "Liberation Serif", serif; stroke-width: .9; }
.tagline { font: 11px "Noto Sans", sans-serif; fill: #2f91a9; }
.cols { display: flex; align-items: flex-start; padding: 13px 0 0 20px; gap: 10px; }
.scorecard { width: 239px; height: 291px; border: 1px solid #b9dde6; border-radius: 9px; background: #fff; overflow: hidden; flex: none; }
.scorehead { height: 96px; border-bottom: 1px solid #b9dde6; background: repeating-linear-gradient(135deg, #fff 0 3px, #f3f8f7 3px 5px); color: #087599; display: flex; flex-direction: column; align-items: center; }
.lbl { font-size: 16px; line-height: 22px; margin-top: 14px; }
.scorehead strong { font-size: 40px; line-height: 50px; margin-top: 1px; }
.cells { display: grid; grid-template-columns: repeat(5, 40.300px); grid-auto-rows: 53.200px; gap: 2px; padding: 15px 14px; }
.cells span { background: #e0f2ce; color: #4b7c1b; display: flex; align-items: center; justify-content: center; font-size: 17.500px; padding-bottom: 2px; }
.cells .on { background: #e4eff5; color: #087599; outline: 2px solid #057a9b; outline-offset: -1px; margin: -.5px; }
.problem { position: relative; width: 749px; height: 550px; border: 1px solid #b9dde6; border-radius: 9px 9px 0 0; background: #fff; flex: none; }
.ribbon { position: absolute; left: 33px; top: -6px; z-index: 1; }
.ribbon b { position: absolute; left: 15px; top: 34px; font-size: 24.500px; line-height: 36px; color: #087599; }
.prompt { height: 94px; border-bottom: 1px solid #e0f2f8; padding: 22px 0 0 138.500px; font: 20.500px/24px "Liberation Serif", serif; color: #333; }
.task { height: 189px; border-bottom: 1px solid #b9dde6; display: flex; padding: 16px 17px 0 46px; align-items: flex-start; }
.part { width: 34px; height: 34px; border: 1.500px solid #c2c2c2; border-radius: 50%; color: #087599; font-weight: 700; font-size: 17.500px; line-height: 28px; text-align: center; margin-top: 3px; }
.formula { margin-left: 52px; }
.formula text { font: 22px "Liberation Serif", serif; fill: #333; }
.formula .fn { font-size: 25px; }
.formula .it { font-style: italic; }
.formula .big { font-size: 25.500px; }
.formula path { fill: none; stroke: #333; stroke-width: 1.200; }
.chapter { margin-left: auto; width: 189px; height: 43px; border: 1px solid #c9ecf7; border-radius: 8px; background: #ebf6fb; color: #0d7799; display: flex; align-items: center; font-size: 16.500px; padding-left: 9px; gap: 8px; }
.note { margin: 25px 17px 0 18px; height: 46px; border: 1px solid #bfe4ec; background: #ebf6fb; color: #4f9ab0; font-size: 16px; line-height: 46px; padding-left: 19px; }
.answer { display: flex; height: 90px; margin-top: 14px; padding-left: 36px; }
.answer b { color: #087599; font-size: 18.500px; line-height: 24px; margin-top: 6px; width: 75px; }
.answer .formula { margin-left: 21px; }
.grade { display: flex; align-items: center; margin: 6px 0 0 33px; width: 190px; height: 55px; border: 0; border-radius: 9px; background: #0b7da1; color: #fff; font: 18px "Noto Sans", sans-serif; padding: 0 0 2px 27px; }
.leftshade { position: absolute; left: 0; top: 0; bottom: 0; width: 34px; background: linear-gradient(90deg, rgba(60,80,85,.4), rgba(60,80,85,.12) 12px, transparent); }
.palette { position: absolute; left: 468px; top: 529px; width: 600px; height: 150px; border: 1px solid #999; border-radius: 5px 0 0 0; background: #eef8f8; box-shadow: 0 0 12px rgba(0,0,0,.6); display: flex; align-items: flex-start; padding: 26px 0 0 13px; }
.hint { width: 278px; height: 130px; border-radius: 12px 12px 0 0; background: #fff; color: #777; font-size: 17px; line-height: 25px; padding: 9px 20px; display: flex; flex-direction: column; flex: none; }
.symbols { margin: 8px 0 0 16px; width: 238px; }
.ptabs { display: flex; height: 37px; gap: 4px; padding-left: 4px; border-bottom: 1px solid #aaa; border-radius: 0 0 5px 5px; font: 20px/38px "Noto Sans", sans-serif; color: #555; }
.ptabs span { border: 1px solid #ccc; border-bottom: 0; border-radius: 6px 6px 0 0; background: #ebebeb; padding-left: 7px; height: 36px; }
.ptabs .cur { width: 69px; height: 37px; background: #fff; border-color: #aaa; color: #111; padding-left: 8px; }
.trig { width: 55px; } .greek { width: 70px; }
.pkeys { display: flex; padding: 14px 0 0 7px; font: 24px/40px "Noto Sans", "DejaVu Sans", sans-serif; }
.pkeys span { height: 60px; border: 1px solid #8d8d8d; border-radius: 7px; background: #ececec; text-align: center; color: #222; box-shadow: 1px 0 #999; flex: none; }
.k1 { width: 42px; } .k2 { width: 43px; } .k3 { width: 47px; } .k4 { width: 49px; } .k5 { width: 43px; }
.close { position: absolute; left: 544px; top: -12px; width: 40px; height: 38px; background: #eef8f8; }
</style>
